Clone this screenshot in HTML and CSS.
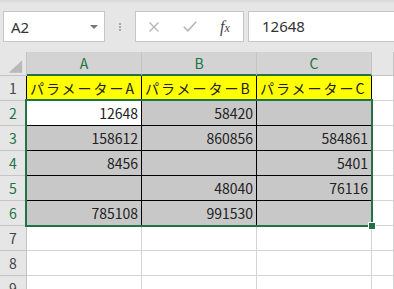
FILE: index.html
```html
<!DOCTYPE html>
<html lang="ja">
<head>
    <meta charset="UTF-8">
    <title>Sheet</title>
    <link rel="stylesheet" href="styles.css">
</head>
<body>
    <!-- Name box + formula bar -->
    <div class="formula-bar">
        <div class="name-box">
            <span>A2</span>
            <svg class="caret" width="8" height="4" viewBox="0 0 8 4"><polygon points="0,0 8,0 4,4" fill="#777"/></svg>
        </div>
        <div class="grip"><i></i><i></i><i></i></div>
        <div class="fx-buttons">
            <svg class="cancel" width="10" height="10" viewBox="0 0 10 10"><path d="M0.5 0.5 L9.5 9.5 M9.5 0.5 L0.5 9.5" stroke="#b4b4b4" stroke-width="1.3" fill="none"/></svg>
            <svg class="enter" width="14" height="11" viewBox="0 0 14 11"><path d="M0.8 5.8 L4.8 9.8 L13.2 0.8" stroke="#b4b4b4" stroke-width="1.5" fill="none"/></svg>
            <span class="fx">f<span>x</span></span>
        </div>
        <div class="formula-input">12648</div>
    </div>

    <!-- Grid -->
    <div class="sheet">
        <div class="c hd corner"><svg width="27" height="24" viewBox="0 0 27 24"><polygon points="23,8 23,21 9,21" fill="#b9b9b9"/></svg></div>
        <div class="c hd ch sel">A</div>
        <div class="c hd ch sel">B</div>
        <div class="c hd ch sel">C</div>
        <div class="c hd ch"></div>

        <div class="c hd rh edge">1</div>
        <div class="c y">パラメーターA</div>
        <div class="c y">パラメーターB</div>
        <div class="c y">パラメーターC</div>
        <div class="c"></div>

        <div class="c hd rh sel">2</div>
        <div class="c w num">12648</div>
        <div class="c g num">58420</div>
        <div class="c g num"></div>
        <div class="c"></div>

        <div class="c hd rh sel">3</div>
        <div class="c g num">158612</div>
        <div class="c g num">860856</div>
        <div class="c g num">584861</div>
        <div class="c"></div>

        <div class="c hd rh sel">4</div>
        <div class="c g num">8456</div>
        <div class="c g num"></div>
        <div class="c g num">5401</div>
        <div class="c"></div>

        <div class="c hd rh sel">5</div>
        <div class="c g num"></div>
        <div class="c g num">48040</div>
        <div class="c g num">76116</div>
        <div class="c"></div>

        <div class="c hd rh sel">6</div>
        <div class="c g num">785108</div>
        <div class="c g num">991530</div>
        <div class="c g num"></div>
        <div class="c"></div>

        <div class="c hd rh">7</div>
        <div class="c"></div>
        <div class="c"></div>
        <div class="c"></div>
        <div class="c"></div>

        <div class="c hd rh">8</div>
        <div class="c"></div>
        <div class="c"></div>
        <div class="c"></div>
        <div class="c"></div>

        <div class="c hd rh">9</div>
        <div class="c"></div>
        <div class="c"></div>
        <div class="c"></div>
        <div class="c"></div>

        <div class="selection"></div>
        <div class="fill-handle"></div>
    </div>
</body>
</html>
```

FILE: styles.css
```css
body {
    margin: 0;
    width: 394px;
    height: 289px;
    overflow: hidden;
    background-color: #ffffff;
    font-family: "Noto Sans CJK JP", "Noto Sans", sans-serif;
}

/* formula bar */
.formula-bar {
    height: 52px;
    box-sizing: border-box;
    padding-top: 11px;
    display: flex;
    align-items: flex-start;
    background: linear-gradient(#d6d6d6, #e6e6e6 3px);
}
.name-box {
    margin-left: 3px;
    width: 102px;
    height: 31px;
    box-sizing: border-box;
    background-color: #fff;
    border: 1px solid #c6c6c6;
    display: flex;
    align-items: center;
    justify-content: space-between;
    padding: 0 6px 0 7px;
    font-family: "Noto Sans", sans-serif;
    font-size: 15px;
    color: #333;
}
.grip {
    width: 30px;
    height: 31px;
    display: flex;
    flex-direction: column;
    align-items: center;
    justify-content: center;
    gap: 1px;
}
.grip i {
    width: 2px;
    height: 2px;
    background-color: #a8a8a8;
}
.fx-buttons {
    width: 109px;
    height: 31px;
    box-sizing: border-box;
    border: 1px solid #c6c6c6;
    background-color: #fff;
    display: flex;
    align-items: center;
}
.cancel {
    margin-left: 13px;
}
.enter {
    margin-left: 24px;
}
.fx {
    margin-left: 23px;
    font-family: "Liberation Serif", serif;
    font-style: italic;
    font-size: 16px;
    color: #444;
}
.fx span {
    font-size: 12px;
}
.formula-input {
    flex: 1;
    margin-left: 4px;
    height: 31px;
    box-sizing: border-box;
    border: 1px solid #c6c6c6;
    border-right: 0;
    background-color: #fff;
    padding-left: 13px;
    font-family: "Noto Sans", sans-serif;
    font-size: 15px;
    line-height: 29px;
    color: #333;
}

/* sheet grid */
.sheet {
    position: relative;
    display: grid;
    grid-template-columns: 27px 115px 115px 115px 1fr;
    grid-template-rows: 24px repeat(9, 25px);
}
.c {
    box-sizing: border-box;
    border-right: 1px solid #d4d4d4;
    border-bottom: 1px solid #d4d4d4;
    display: flex;
    align-items: center;
    font-size: 14px;
    color: #222;
    white-space: nowrap;
    overflow: hidden;
}
.hd {
    background-color: #e6e6e6;
    border-color: #c4c4c4;
    justify-content: center;
    color: #444;
}
.corner {
    align-items: flex-start;
    justify-content: flex-start;
}
.ch.sel {
    background-color: #d3d3d3;
    color: #217346;
    border-bottom: 2px solid #217346;
}
.rh.sel {
    color: #217346;
}
.rh.edge {
    border-right-color: #000;
}
.y {
    background-color: #ffff00;
    border-color: #000;
    padding-left: 3px;
    letter-spacing: 2px;
}
.g {
    background-color: #c8c8c8;
    border-color: #000;
}
.w {
    background-color: #fff;
    border-color: #000;
}
.num {
    justify-content: flex-end;
    padding-right: 3px;
}

/* selection outline */
.selection {
    position: absolute;
    left: 25px;
    top: 47px;
    width: 348px;
    height: 128px;
    box-sizing: border-box;
    border: 2px solid #217346;
    pointer-events: none;
}
.fill-handle {
    position: absolute;
    left: 369px;
    top: 171px;
    width: 6px;
    height: 6px;
    background-color: #217346;
    box-shadow: 0 0 0 1px #fff;
}
```
